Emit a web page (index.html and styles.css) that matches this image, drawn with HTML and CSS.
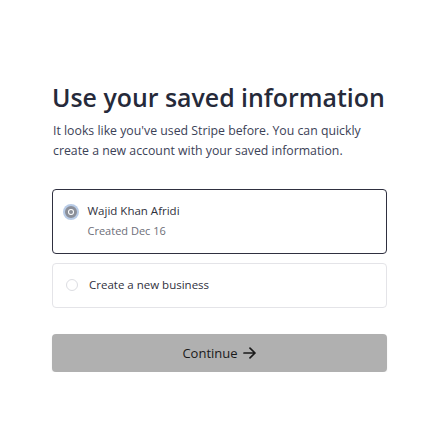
FILE: index.html
```html
<!DOCTYPE html>
<html lang="en">
<head>
<meta charset="utf-8">
<title>Use your saved information</title>
<link rel="stylesheet" href="styles.css">
</head>
<body>
<main class="page">
  <h1 class="title">Use your saved information</h1>
  <p class="lead">It looks like you've used Stripe before. You can quickly create a new account with your saved information.</p>
  <div class="options">
    <label class="option option--selected">
      <span class="radio radio--checked"></span>
      <span class="option-text">
        <span class="option-name">Wajid Khan Afridi</span>
        <span class="option-meta">Created Dec 16</span>
      </span>
    </label>
    <label class="option">
      <span class="radio"></span>
      <span class="option-text">
        <span class="option-name">Create a new business</span>
      </span>
    </label>
  </div>
  <button class="continue" type="button">Continue
    <svg class="arrow" width="14" height="12" viewBox="0 0 14 12" aria-hidden="true"><path d="M1 6h11M7 1.2L12 6l-5 4.8" fill="none" stroke="currentColor" stroke-width="1.7" stroke-linecap="round" stroke-linejoin="round"/></svg>
  </button>
</main>
</body>
</html>
```
FILE: styles.css
```css
html, body {
  margin: 0;
  padding: 0;
  background: #ffffff;
}
body {
  font-family: "Open Sans", "Noto Sans", sans-serif;
  color: #30313d;
}
.page {
  width: 335px;
  margin-left: 52px;
  padding-top: 81px;
}
.title {
  margin: 0;
  font-size: 24.9px;
  line-height: 32px;
  font-weight: 600;
  color: #262a3a;
  letter-spacing: 0;
  white-space: nowrap;
}
.lead {
  margin: 8px 0 0 1px;
  max-width: 322px;
  font-size: 12.3px;
  line-height: 20px;
  color: #3c4257;
}
.options {
  margin-top: 28px;
  display: flex;
  flex-direction: column;
  gap: 9px;
}
.option {
  display: flex;
  align-items: flex-start;
  gap: 11px;
  border: 1px solid #e4e4e8;
  border-radius: 4px;
  padding: 14px 12px 15px 13px;
}
.option--selected {
  border: 1.5px solid #2f3040;
  padding: 14px 12px 0 11.5px;
  height: 48.5px;
}
.option-text {
  display: flex;
  flex-direction: column;
}
.option-name {
  font-size: 11.5px;
  line-height: 14px;
  color: #30313d;
  font-weight: 500;
}
.option-meta {
  margin-top: 6px;
  font-size: 11px;
  line-height: 14px;
  color: #6d6e78;
  font-weight: 400;
}
.radio {
  width: 12px;
  height: 12px;
  border-radius: 50%;
  border: 1px solid #dcdde2;
  box-sizing: border-box;
  margin-top: 1.5px;
  flex: none;
  background: #fff;
}
.radio--checked {
  border: 3px solid #8b8f99;
  background: #fff;
  box-shadow: 0 0 0 2px #b8cbe6;
  position: relative;
}
.radio--checked::after {
  content: "";
  position: absolute;
  left: 1px;
  top: 1px;
  width: 4px;
  height: 4px;
  border-radius: 50%;
  background: #8b8f99;
}
.continue {
  margin-top: 26px;
  width: 100%;
  height: 38px;
  border: none;
  border-radius: 4px;
  background: #b0b0b0;
  color: #1a1a1a;
  font-family: "Open Sans", "Noto Sans", sans-serif;
  font-size: 13px;
  font-weight: 500;
  display: flex;
  align-items: center;
  justify-content: center;
  gap: 5px;
  box-shadow: 0 1px 2px rgba(0,0,0,0.08);
}
.arrow {
  display: block;
}
```
